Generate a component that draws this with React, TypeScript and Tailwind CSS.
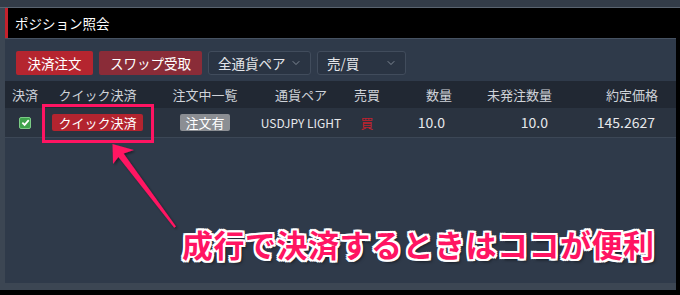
import { ChevronDown } from 'lucide-react';

const cols = 'grid grid-cols-[40px_105px_110px_82px_50px_60px_104px_106px] items-center';

const Select = ({ label, width }: { label: string; width: string }) => (
  <div
    className={`${width} h-[24px] flex items-center justify-between pl-[9px] pr-[8px] bg-[#2a3443] border border-[#414c5c] rounded-[3px] text-[13.5px] text-[#e4e6ea]`}
  >
    <span>{label}</span>
    <ChevronDown size={12} strokeWidth={1.5} className="text-[#9aa3ae]" />
  </div>
);

const CheckBox = () => (
  <div className="w-[12px] h-[12px] rounded-[2px] bg-[#3fa34d] border border-[#7ccb86] flex items-center justify-center">
    <svg width="9" height="9" viewBox="0 0 10 10">
      <path d="M1.5 5.2 L4 7.6 L8.6 2.4" fill="none" stroke="#fff" strokeWidth="2" />
    </svg>
  </div>
);

export default function App() {
  return (
    <div className="relative w-[680px] h-[295px] overflow-hidden bg-black font-['Noto_Sans_CJK_JP',sans-serif]">
      {/* bottom edge of the panel above */}
      <div className="h-[8px] bg-[#333c48] border-b border-[#5a6470]" />

      <div className="w-[676px] h-[282px] flex flex-col bg-[#2f3a4a] border-l-[5px] border-b-[7px] border-[#3c4653]">
        {/* title */}
        <div className="h-[30px] flex items-center pl-[7px] bg-black border-l-[3px] border-[#c4212c] text-[13.5px] text-white">
          ポジション照会
        </div>

        {/* toolbar */}
        <div className="h-[43px] flex items-start gap-[6px] pt-[12px] pl-[11px] border-t border-[#465262]">
          <button className="w-[77px] h-[24px] rounded-[2px] bg-[#b5252f] text-[13.5px] text-white">決済注文</button>
          <button className="w-[103px] h-[24px] rounded-[2px] bg-[#8a2c38] text-[13.5px] text-white">スワップ受取</button>
          <Select label="全通貨ペア" width="w-[103px]" />
          <Select label="売/買" width="w-[89px]" />
        </div>

        {/* header */}
        <div className={`${cols} h-[27px] bg-[#212833] text-[13px] text-[#cfd3d9]`}>
          <div className="text-center">決済</div>
          <div className="text-center">クイック決済</div>
          <div className="text-center">注文中一覧</div>
          <div className="text-center">通貨ペア</div>
          <div className="text-center">売買</div>
          <div className="text-right">数量</div>
          <div className="text-right pr-[4px]">未発注数量</div>
          <div className="text-right pr-[4px]">約定価格</div>
        </div>

        {/* row */}
        <div className={`${cols} h-[30px] bg-[#2a3340] border-b border-[#3c4756] text-[#e6e8eb]`}>
          <div className="flex justify-center">
            <CheckBox />
          </div>
          <div className="flex justify-center">
            <span className="h-[17px] px-[6px] flex items-center rounded-[2px] bg-[#b3242f] text-[13px] text-white">
              クイック決済
            </span>
          </div>
          <div className="flex justify-center">
            <span className="h-[17px] px-[5px] flex items-center rounded-[2px] bg-[#8b8e93] text-[13px] text-white">
              注文有
            </span>
          </div>
          <div className="text-center text-[12px] whitespace-nowrap">USDJPY LIGHT</div>
          <div className="text-center text-[13px] text-[#c0222e]">買</div>
          <div className="text-right pr-[7px] text-[14px]">10.0</div>
          <div className="text-right pr-[8px] text-[14px]">10.0</div>
          <div className="text-right pr-[7px] text-[14px]">145.2627</div>
        </div>

        <div className="flex-1" />
      </div>

      {/* annotation */}
      <div className="absolute left-[42px] top-[104px] w-[112px] h-[39px] border-[3px] border-[#ff1462]" />
      <svg className="absolute left-0 top-0 pointer-events-none" width="680" height="295">
        <defs>
          <filter id="shadow" x="-20%" y="-20%" width="140%" height="140%">
            <feDropShadow dx="1.5" dy="1.5" stdDeviation="1.2" floodColor="#000" floodOpacity="0.45" />
          </filter>
        </defs>
        <polygon
          points="112.5,144 134,150 123.6,153.4 176,226.4 174.2,227.8 118.4,157 113,164"
          fill="#ff1462"
          filter="url(#shadow)"
        />
      </svg>
      <div className="absolute left-[182px] top-[228px] whitespace-nowrap text-[31px] leading-none tracking-[0.5px] font-bold text-[#ff1462] [text-shadow:2px_0_0_#fff,-2px_0_0_#fff,0_2px_0_#fff,0_-2px_0_#fff,2px_2px_0_#fff,-2px_-2px_0_#fff,2px_-2px_0_#fff,-2px_2px_0_#fff,3px_3px_3px_rgba(0,0,0,0.5)]">
        成行で決済するときはココが便利
      </div>
    </div>
  );
}
